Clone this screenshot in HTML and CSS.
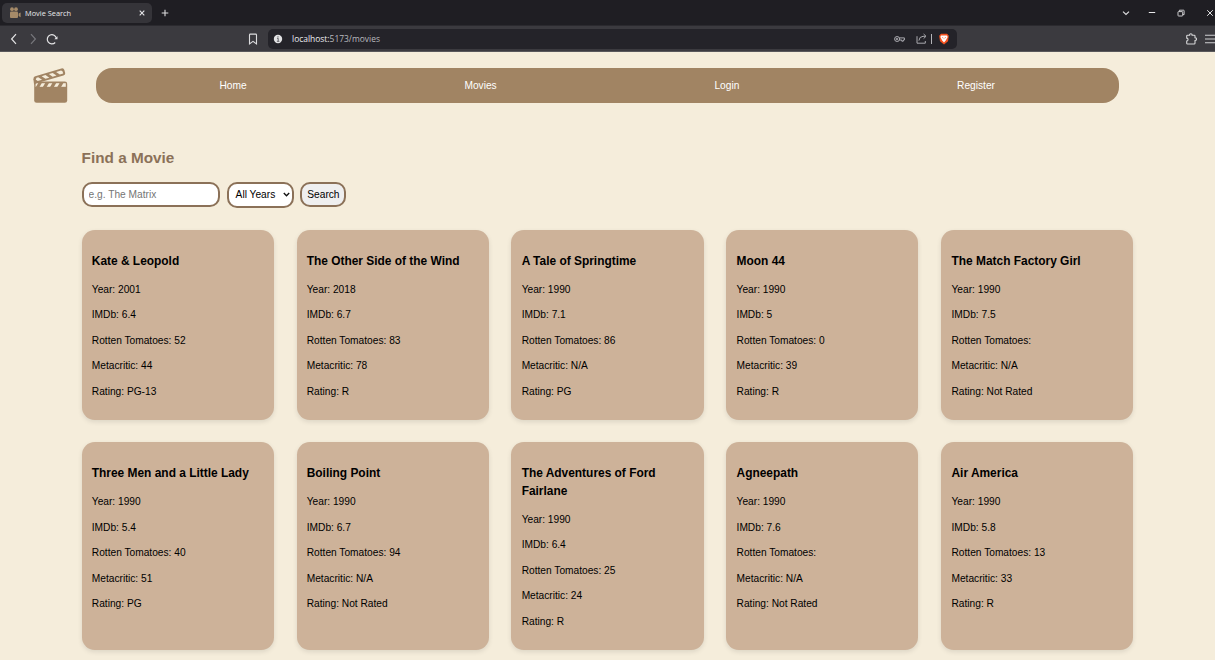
FILE: index.html
```html
<!DOCTYPE html>
<html lang="en">
<head>
<meta charset="utf-8">
<title>Movie Search</title>
<link rel="stylesheet" href="styles.css">
</head>
<body>
<div class="browser">
  <div class="tabs">
    <div class="tab">
      <svg class="favicon" width="12" height="12" viewBox="0 0 12 12" fill="#a58a68"><circle cx="3" cy="2.2" r="1.9"/><circle cx="7" cy="2.2" r="1.9"/><rect x="1" y="4.6" width="8" height="6.4" rx="1"/><path d="M9.6 6.6 11.6 5.4v4.8L9.6 9z"/></svg>
      <span class="tab-title">Movie Search</span>
      <svg width="6" height="6" viewBox="0 0 6 6" stroke="#e6e6e8" stroke-width="1.1"><path d="M.7.7l4.6 4.6M5.3.7.7 5.3"/></svg>
    </div>
    <svg class="plus" width="8" height="8" viewBox="0 0 8 8" stroke="#dcdcde" stroke-width="1.1"><path d="M4 .7v6.6M.7 4h6.6"/></svg>
    <div class="window-buttons">
      <svg width="8" height="8" viewBox="0 0 8 8" fill="none" stroke="#dedee0" stroke-width="1.2"><path d="M1 2.6 4 5.4l3-2.8"/></svg>
      <svg width="8" height="8" viewBox="0 0 8 8" stroke="#e8e8ea"><path d="M.8 3.5h6.4"/></svg>
      <svg width="8" height="8" viewBox="0 0 8 8" fill="none" stroke="#dedee0" stroke-width=".9"><rect x="1" y="2.6" width="4.7" height="4.4" rx=".6"/><path d="M2.4 2.5V1.2h4.2q.5 0 .5.5v3.9H5.8"/></svg>
      <svg width="8" height="8" viewBox="0 0 8 8" stroke="#dedee0"><path d="M1.2 1.2l5.6 5.6M6.8 1.2 1.2 6.8"/></svg>
    </div>
  </div>
  <div class="toolbar">
    <div class="history">
      <svg width="8" height="12" viewBox="0 0 8 12" fill="none" stroke="#e4e4e6" stroke-width="1.2"><path d="M6 1.2 1.6 6 6 10.8"/></svg>
      <svg width="8" height="12" viewBox="0 0 8 12" fill="none" stroke="#77777c" stroke-width="1.2"><path d="M2 1.2 6.4 6 2 10.8"/></svg>
      <svg width="12" height="12" viewBox="0 0 12 12" fill="none" stroke="#e4e4e6" stroke-width="1.2"><path d="M9.2 9.5A4.6 4.6 0 1 1 10.4 5.5"/><path d="M11.5 3.2v3H8.3z" fill="#e4e4e6" stroke="none"/></svg>
    </div>
    <svg class="bookmark" width="10" height="12" viewBox="0 0 10 12" fill="none" stroke="#dcdcde" stroke-width="1.1"><path d="M1.5 1.9q0-.8.8-.8h5.4q.8 0 .8.8v9L5 8.4l-3.5 2.5z"/></svg>
    <div class="address">
      <svg width="10" height="10" viewBox="0 0 10 10"><circle cx="5" cy="5" r="4.2" fill="#e2e2e4"/><path d="M4 4.3h1.2v3M3.9 7.3h2.5" stroke="#55555a" stroke-width=".9" fill="none"/><circle cx="5" cy="2.8" r=".65" fill="#55555a"/></svg>
      <span class="url"><b>localhost:</b>5173/movies</span>
      <svg class="key" width="11" height="8" viewBox="0 0 11 8" fill="none" stroke="#b9b9be" stroke-width=".9"><circle cx="3.1" cy="4" r="2.5"/><circle cx="3" cy="4" r=".8"/><path d="M5.4 2.9h5v2.1H9.3v1.2H7.8V5H5.4"/></svg>
      <svg class="share" width="11" height="11" viewBox="0 0 11 11" fill="none" stroke="#a9a9ae" stroke-width="1"><path d="M1 3.2v7h8.3V8M2.9 7.6Q3.3 3.5 7 3.3h2.5M7.6 1l2.4 2.3-2.4 2.3"/></svg>
      <span class="divider"></span>
      <svg width="10" height="12" viewBox="0 0 10 12"><path d="M2 .7h6l1.8 2-.8 5.5L5 11.6 1 8.2.2 2.7z" fill="#f4511e"/><path d="M2.1 2.6h5.8l.8 1.4-1.8 3.3L5 9.6 3.1 7.3 1.3 4z" fill="#fff"/><path d="M2.9 4l1.4.5-.5.8zM7.1 4l-1.4.5.5.8zM4.6 5h.8L5 6.6z" fill="#f4511e"/></svg>
    </div>
    <div class="extras">
      <svg width="12" height="12" viewBox="0 0 12 12" fill="none" stroke="#d6d6d8" stroke-width="1.1"><path d="M2.6 2.3h2c-.3-2 2.8-2 2.5 0h2.1q.8 0 .8.8v1.7c2 0 2 2.7 0 2.7v2.8q0 .7-.8.7H2.6q-.9 0-.9-.8V8.1C3.5 8 3.5 5.2 1.7 5.1v-2q0-.8.9-.8z"/></svg>
      <svg width="10" height="10" viewBox="0 0 10 10" stroke="#d0d0d2" stroke-width="1.1"><path d="M0 1.2h11M0 5h11M0 8.8h11"/></svg>
    </div>
  </div>
</div>

<header class="header">
  <svg class="logo" width="36" height="37" viewBox="0 0 36 37">
    <rect x="1.2" y="13.4" width="33" height="21.4" rx="2.4" fill="#a18463"/>
    <path d="M2.6 15.2h30.2v3.6H2.6z" fill="#f5eddb"/>
    <path d="M5.2 15h3.6l-2.3 4H2.9zM12.2 15h3.8l-2.3 4H9.9zM19.4 15h3.8l-2.3 4h-3.8zM26.6 15h3.8l-2.3 4h-3.8z" fill="#a18463"/>
    <g transform="translate(0 8.9) rotate(-16.5)">
      <rect x="0" y="0" width="32" height="7.2" rx="2.4" fill="#a18463"/>
      <path d="M3.1 1.8h1.8l2.9 3.6H3.4L1.8 3.6zM8.5 1.8h4l2.9 3.6h-4zM16 1.8h4l2.9 3.6h-4zM23.5 1.8h5.2l1.2 1.1v2.5h-3.5z" fill="#f5eddb"/>
    </g>
    <path d="M.3 10.8 5 13.8 1.2 17z" fill="#a18463"/>
  </svg>
  <nav class="nav"><a>Home</a><a>Movies</a><a>Login</a><a>Register</a></nav>
</header>

<main class="main">
  <h2 class="title">Find a Movie</h2>
  <form class="search">
    <input class="field" type="text" placeholder="e.g. The Matrix">
    <div class="field select"><span>All Years</span><svg width="7" height="5" viewBox="0 0 7 5" fill="none" stroke="#111" stroke-width="1.4"><path d="M.8 1l2.7 2.7L6.2 1"/></svg></div>
    <button class="field button" type="button">Search</button>
  </form>
  <section class="grid">
    <article class="card"><h3>Kate &amp; Leopold</h3><p>Year: 2001</p><p>IMDb: 6.4</p><p>Rotten Tomatoes: 52</p><p>Metacritic: 44</p><p>Rating: PG-13</p></article>
    <article class="card"><h3>The Other Side of the Wind</h3><p>Year: 2018</p><p>IMDb: 6.7</p><p>Rotten Tomatoes: 83</p><p>Metacritic: 78</p><p>Rating: R</p></article>
    <article class="card"><h3>A Tale of Springtime</h3><p>Year: 1990</p><p>IMDb: 7.1</p><p>Rotten Tomatoes: 86</p><p>Metacritic: N/A</p><p>Rating: PG</p></article>
    <article class="card"><h3>Moon 44</h3><p>Year: 1990</p><p>IMDb: 5</p><p>Rotten Tomatoes: 0</p><p>Metacritic: 39</p><p>Rating: R</p></article>
    <article class="card"><h3>The Match Factory Girl</h3><p>Year: 1990</p><p>IMDb: 7.5</p><p>Rotten Tomatoes:</p><p>Metacritic: N/A</p><p>Rating: Not Rated</p></article>
    <article class="card"><h3>Three Men and a Little Lady</h3><p>Year: 1990</p><p>IMDb: 5.4</p><p>Rotten Tomatoes: 40</p><p>Metacritic: 51</p><p>Rating: PG</p></article>
    <article class="card"><h3>Boiling Point</h3><p>Year: 1990</p><p>IMDb: 6.7</p><p>Rotten Tomatoes: 94</p><p>Metacritic: N/A</p><p>Rating: Not Rated</p></article>
    <article class="card"><h3>The Adventures of Ford Fairlane</h3><p>Year: 1990</p><p>IMDb: 6.4</p><p>Rotten Tomatoes: 25</p><p>Metacritic: 24</p><p>Rating: R</p></article>
    <article class="card"><h3>Agneepath</h3><p>Year: 1990</p><p>IMDb: 7.6</p><p>Rotten Tomatoes:</p><p>Metacritic: N/A</p><p>Rating: Not Rated</p></article>
    <article class="card"><h3>Air America</h3><p>Year: 1990</p><p>IMDb: 5.8</p><p>Rotten Tomatoes: 13</p><p>Metacritic: 33</p><p>Rating: R</p></article>
  </section>
</main>
</body>
</html>
```
FILE: styles.css
```css
* { box-sizing: border-box; }
body {
  margin: 0;
  height: 660px;
  overflow: hidden;
  background: #f5eddb;
  color: #000;
  font: 10.2px/1.5 "Liberation Sans", Arial, sans-serif;
}
svg { display: block; flex: none; }

.browser {
  height: 52px;
  background: #3b3a3f;
  border-bottom: 1px solid #59585b;
  font-family: "Open Sans", "Noto Sans", sans-serif;
  color: #e9e9eb;
}
.tabs {
  display: flex;
  align-items: center;
  height: 26px;
  padding-left: 2px;
  background: #1f1e23;
  border-bottom: 1px solid #2b2a2f;
}
.tab {
  display: flex;
  align-items: center;
  width: 150px;
  height: 20px;
  padding: 0 7px;
  border-radius: 5px;
  background: #353439;
}
.tab-title { flex: 1; margin-left: 4px; font-size: 7.4px; line-height: 12px; white-space: nowrap; }
.plus { margin-left: 9px; }
.window-buttons { display: flex; gap: 21px; margin-left: auto; margin-right: 1px; }
.window-buttons svg:first-child { margin-right: 0; }
.window-buttons svg:nth-child(2) { margin-right: 0; margin-left: -3px; }
.toolbar { display: flex; align-items: center; height: 25px; }
.history { display: flex; gap: 11px; width: 248px; padding-left: 10px; }
.history svg:last-child { margin-left: -2px; }
.address {
  display: flex;
  align-items: center;
  width: 689px;
  height: 20px;
  margin-left: 10px;
  padding: 0 8px 0 5px;
  border-radius: 5px;
  background: #242329;
}
.url { margin: 0 auto 0 9px; font-size: 8.45px; line-height: 14px; color: #b9b9be; }
.url b { font-weight: 400; color: #ededf0; }
.key { margin-right: 11px; }
.share { margin-right: 4px; }
.divider { width: 1px; height: 10px; margin-right: 7px; background: #b4b4b8; }
.extras { display: flex; align-items: center; gap: 8px; margin-left: auto; }

.header { display: flex; padding: 15.5px 96px 0 32.5px; }
.logo { margin-right: 27px; }
.nav {
  display: flex;
  flex: 1;
  align-items: center;
  justify-content: space-between;
  height: 35.7px;
  padding: 0 124px;
  border-radius: 16px;
  background: #a18463;
  color: #fff;
}

.main { padding: 41px 81.6px 0; }
.title { margin: 0; color: #8b7158; font-size: 15.3px; line-height: 23px; }
.search { display: flex; gap: 6.5px; height: 26px; margin: 13.2px 0 22.6px; }
.field {
  height: 25.5px;
  padding: 0 5px;
  border: 2px solid #8b7158;
  border-radius: 10px;
  background: #fff;
  color: #000;
  font: 10.2px "Liberation Sans", Arial, sans-serif;
}
input.field { width: 138.5px; }
input::placeholder { color: #757575; }
.select {
  display: flex;
  align-items: center;
  justify-content: space-between;
  width: 67.3px;
  height: 26px;
  padding: 0 2px 0 7px;
}
.button { width: 46px; padding: 0 4px; background: #efefef; }

.grid { display: grid; grid-template-columns: repeat(5, 1fr); gap: 22.8px; }
.card {
  padding: 10.2px;
  border-radius: 12.8px;
  background: #cdb299;
  box-shadow: 0 2px 5px rgba(0, 0, 0, .1);
}
.card h3 { margin: 12.1px 0 11.5px; font-size: 11.93px; }
.card p { margin: 10.2px 0; }
```
